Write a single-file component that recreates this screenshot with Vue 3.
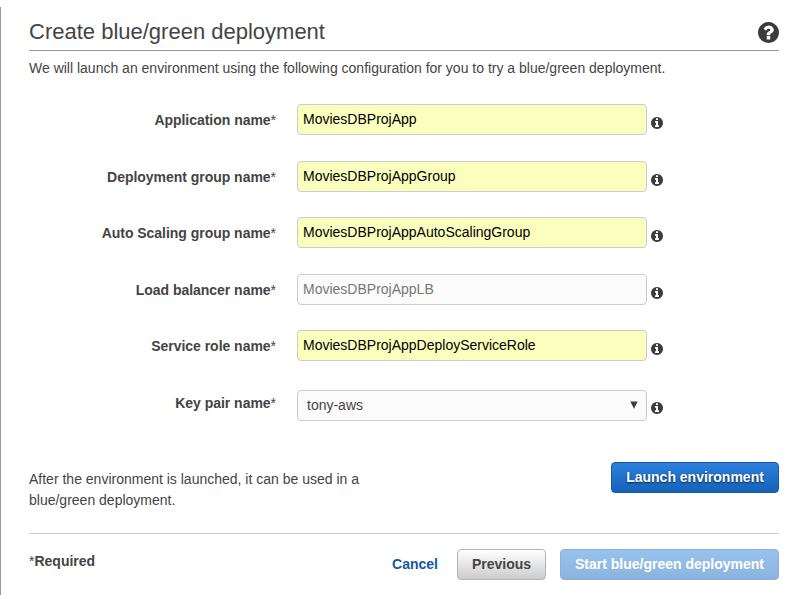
<script setup>
import { ref } from 'vue'

const fields = ref([
  { label: 'Application name', value: 'MoviesDBProjApp', filled: true },
  { label: 'Deployment group name', value: 'MoviesDBProjAppGroup', filled: true },
  { label: 'Auto Scaling group name', value: 'MoviesDBProjAppAutoScalingGroup', filled: true },
  { label: 'Load balancer name', value: 'MoviesDBProjAppLB', filled: false },
  { label: 'Service role name', value: 'MoviesDBProjAppDeployServiceRole', filled: true },
  { label: 'Key pair name', value: 'tony-aws', select: true },
])

const disc = 'q0 209-103 385.5t-279.5 279.5-385.5 103-385.5-103-279.5-279.5-103-385.5 103-385.5 279.5-279.5 385.5-103 385.5 103 279.5 279.5 103 385.5z'
const helpPath = 'M1024 1376v-192q0-14-9-23t-23-9h-192q-14 0-23 9t-9 23v192q0 14 9 23t23 9h192q14 0 23-9t9-23zm256-672q0-88-55.5-163t-138.5-116-170.5-41q-243 0-371 213-15 24 8 42l132 100q7 6 19 6 16 0 25-12 53-68 86-92 34-24 86-24 48 0 85.5 26t37.5 59q0 38-20 61t-68 45q-63 28-115.5 86.5t-52.5 125.5v36q0 14 9 23t23 9h192q14 0 23-9t9-23q0-19 21.5-49.5t54.5-49.5q32-18 49-28.5t46-35 44.5-48 28-60.5 12.5-81zm384 192' + disc
const infoPath = 'M1152 1376v-160q0-14-9-23t-23-9h-96v-512q0-14-9-23t-23-9h-320q-14 0-23 9t-9 23v160q0 14 9 23t23 9h96v320h-96q-14 0-23 9t-9 23v160q0 14 9 23t23 9h448q14 0 23-9t9-23zm-128-896v-160q0-14-9-23t-23-9h-192q-14 0-23 9t-9 23v160q0 14 9 23t23 9h192q14 0 23-9t9-23zm640 416' + disc
</script>

<template>
  <main class="page">
    <section class="panel">
      <header class="head">
        <h1>Create blue/green deployment</h1>
        <svg class="help" viewBox="128 128 1536 1536"><path :d="helpPath" /></svg>
      </header>
      <p class="intro">We will launch an environment using the following configuration for you to try a blue/green deployment.</p>

      <form class="form" @submit.prevent>
        <div v-for="f in fields" :key="f.label" class="row" :class="{ last: f.select }">
          <label>{{ f.label }}<span class="star">*</span></label>
          <div class="control" :class="{ filled: f.filled, select: f.select }">
            <span>{{ f.value }}</span>
            <svg v-if="f.select" class="caret" viewBox="0 0 8 8"><path d="M0.3 0.5h7.4L4 7.7z" /></svg>
          </div>
          <svg class="info" viewBox="128 128 1536 1536"><path :d="infoPath" /></svg>
        </div>
      </form>

      <div class="launch">
        <p>After the environment is launched, it can be used in a blue/green deployment.</p>
        <button type="button" class="btn primary">Launch environment</button>
      </div>

      <footer class="foot">
        <div class="required"><span class="star">*</span>Required</div>
        <div class="actions">
          <a class="cancel">Cancel</a>
          <button type="button" class="btn plain">Previous</button>
          <button type="button" class="btn disabled">Start blue/green deployment</button>
        </div>
      </footer>
    </section>
  </main>
</template>

<style>
body { margin: 0; background: #fff; }
</style>

<style scoped>
* { box-sizing: border-box; }
.page {
  width: 795px;
  height: 599px;
  padding: 7px 0 4px;
  overflow: hidden;
  font: 14px/21px "Liberation Sans", Arial, sans-serif;
  color: #444;
}
.panel {
  height: 588px;
  padding: 0 16px 0 28px;
  border-left: 1px solid #999;
}
.head {
  display: flex;
  justify-content: space-between;
  align-items: flex-start;
  height: 44px;
  border-bottom: 1px solid #999;
}
h1 { margin: 10px 0 0; font-size: 22px; line-height: 30px; font-weight: 400; }
svg { display: block; fill: #3c3c3c; flex: none; }
.help { width: 21px; height: 21px; margin-top: 15px; }
.intro { margin: 7px 0 0; white-space: nowrap; }
.form { padding-top: 25.25px; }
.row { display: flex; height: 56.5px; }
label {
  width: 247px;
  padding-top: 6px;
  text-align: right;
  font-weight: 700;
  letter-spacing: -0.03px;
}
.star { font-weight: 400; }
.control {
  display: flex;
  align-items: center;
  justify-content: space-between;
  width: 350px;
  height: 31px;
  margin-left: 21px;
  padding: 0 8px 0 5px;
  border: 1px solid #ccc;
  border-radius: 4px;
  background: #fbfbfb;
  color: #777;
}
.filled { background: #faffbd; color: #000; }
.select { padding: 0 8px 0 9px; color: #444; }
.caret { width: 8px; height: 8px; }
.info { width: 12px; height: 12px; margin: 13px 0 0 3.5px; }
.last { padding-top: 3px; }
.last label { padding-top: 3px; }
.last .info { margin-top: 12px; }
.launch {
  display: flex;
  justify-content: space-between;
  align-items: flex-start;
  height: 90px;
  margin-top: 0.75px;
  border-bottom: 1px solid #ccc;
}
.launch p { width: 350px; margin: 25px 0 0; }
.btn {
  height: 31px;
  margin: 0;
  padding: 0 14px;
  border: 1px solid;
  border-radius: 4px;
  font: 700 14px/29px "Liberation Sans", Arial, sans-serif;
  white-space: nowrap;
}
.primary {
  width: 168px;
  margin-top: 18px;
  color: #fff;
  border-color: #1459a8;
  background: linear-gradient(#2c80dc, #1563b8);
  text-shadow: 0 1px 2px rgba(0, 0, 0, 0.7);
}
.foot { display: flex; justify-content: space-between; padding-top: 15px; }
.required { padding-top: 2px; font-weight: 700; }
.actions { display: flex; align-items: center; }
.cancel { margin-right: 19px; color: #1459a8; font-weight: 700; }
.plain {
  width: 89px;
  margin-right: 14px;
  color: #444;
  border-color: #b4b4b4;
  background: linear-gradient(#fff, #ccc);
}
.disabled {
  width: 219px;
  color: #fff;
  border-color: #89b1da;
  background: linear-gradient(#98c2ee, #8bb4dd);
}
</style>
